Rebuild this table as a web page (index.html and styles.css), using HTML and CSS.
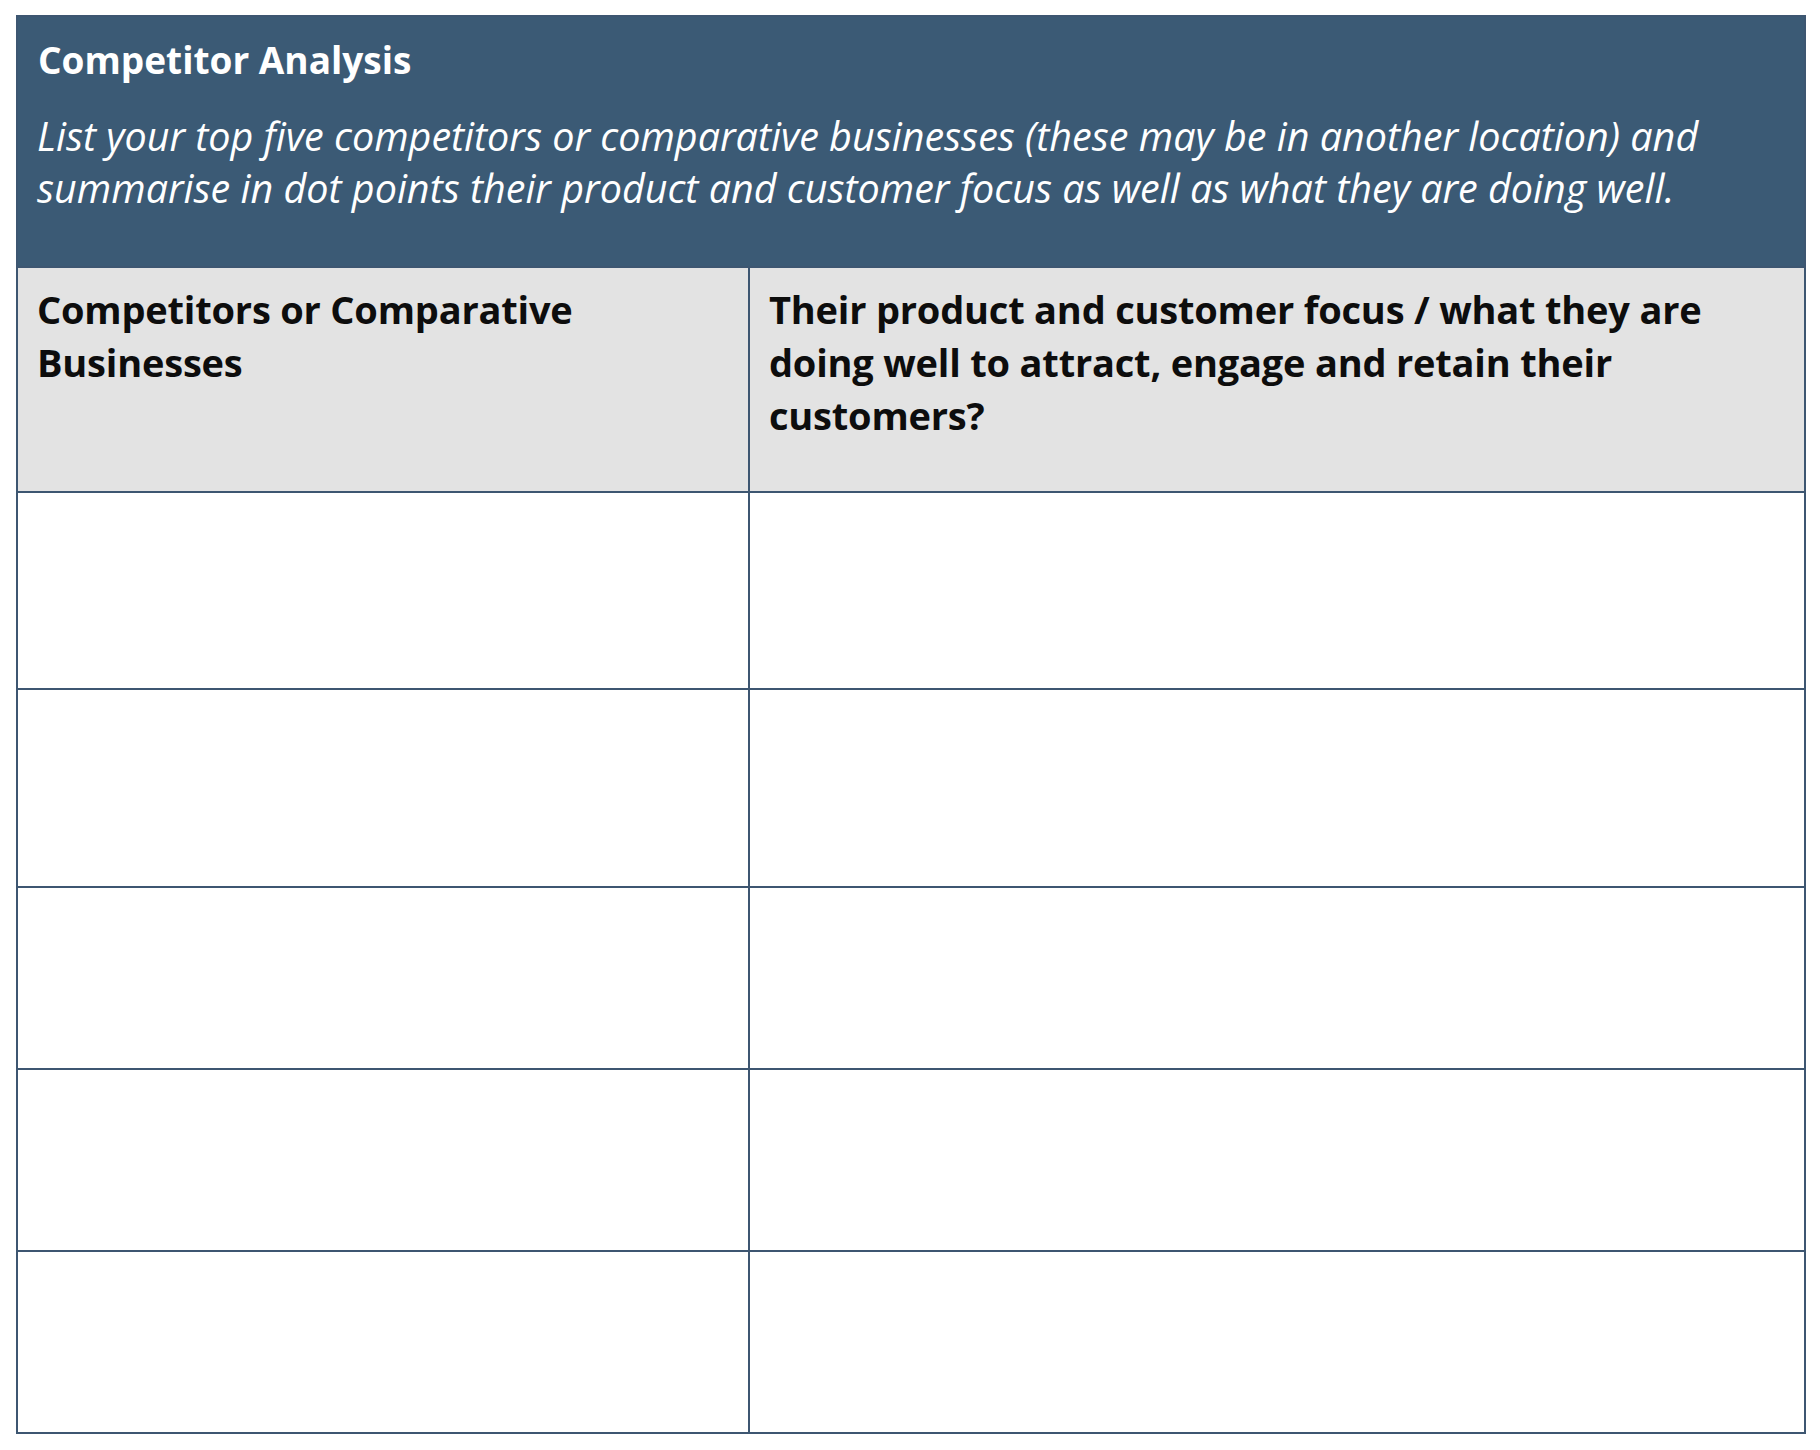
FILE: index.html
```html
<!DOCTYPE html>
<html lang="en">
<head>
<meta charset="utf-8">
<title>Competitor Analysis</title>
<link rel="stylesheet" href="styles.css">
</head>
<body>
<table class="sheet">
  <colgroup>
    <col class="col-a">
    <col class="col-b">
  </colgroup>
  <thead>
    <tr class="banner">
      <th colspan="2">
        <div class="title">Competitor Analysis</div>
        <p class="intro">List your top five competitors or comparative businesses (these may be in another location) and summarise in dot points their product and customer focus as well as what they are doing well.</p>
      </th>
    </tr>
    <tr class="heads">
      <th>Competitors or Comparative Businesses</th>
      <th>Their product and customer focus / what they are doing well to attract, engage and retain their customers?</th>
    </tr>
  </thead>
  <tbody>
    <tr class="row first"><td></td><td></td></tr>
    <tr class="row tall"><td></td><td></td></tr>
    <tr class="row"><td></td><td></td></tr>
    <tr class="row"><td></td><td></td></tr>
    <tr class="row"><td></td><td></td></tr>
  </tbody>
</table>
</body>
</html>
```

FILE: styles.css
```css
html, body {
  margin: 0;
  background: #ffffff;
}
body {
  padding: 15px 14px 16px 16px;
  font-family: "Open Sans", Lato, sans-serif;
}
.sheet {
  width: 1790px;
  border-collapse: collapse;
  border: 2px solid #3d5671;
  table-layout: fixed;
}
.col-a { width: 732px; }
.sheet th, .sheet td {
  border: 2px solid #3d5671;
  vertical-align: top;
  text-align: left;
  padding: 0;
}
.banner th {
  background: #3b5a75;
  color: #ffffff;
  height: 251px;
  padding: 21px 20px 0 19px;
  box-sizing: border-box;
}
.title {
  font-weight: 700;
  font-size: 37px;
  line-height: 44px;
  padding-left: 1px;
}
.intro {
  margin: 28px 0 0 0;
  font-style: italic;
  font-weight: 400;
  font-size: 39.5px;
  line-height: 52px;
}
.heads th {
  background: #e3e3e3;
  color: #0d0d0d;
  font-weight: 700;
  font-size: 38px;
  letter-spacing: -0.2px;
  line-height: 53px;
  height: 225px;
  padding: 15px 18px 0 19px;
  box-sizing: border-box;
}
.row td { height: 180px; background: #fff; }
.row.first td { height: 195px; }
.row.tall td { height: 196px; }
```
